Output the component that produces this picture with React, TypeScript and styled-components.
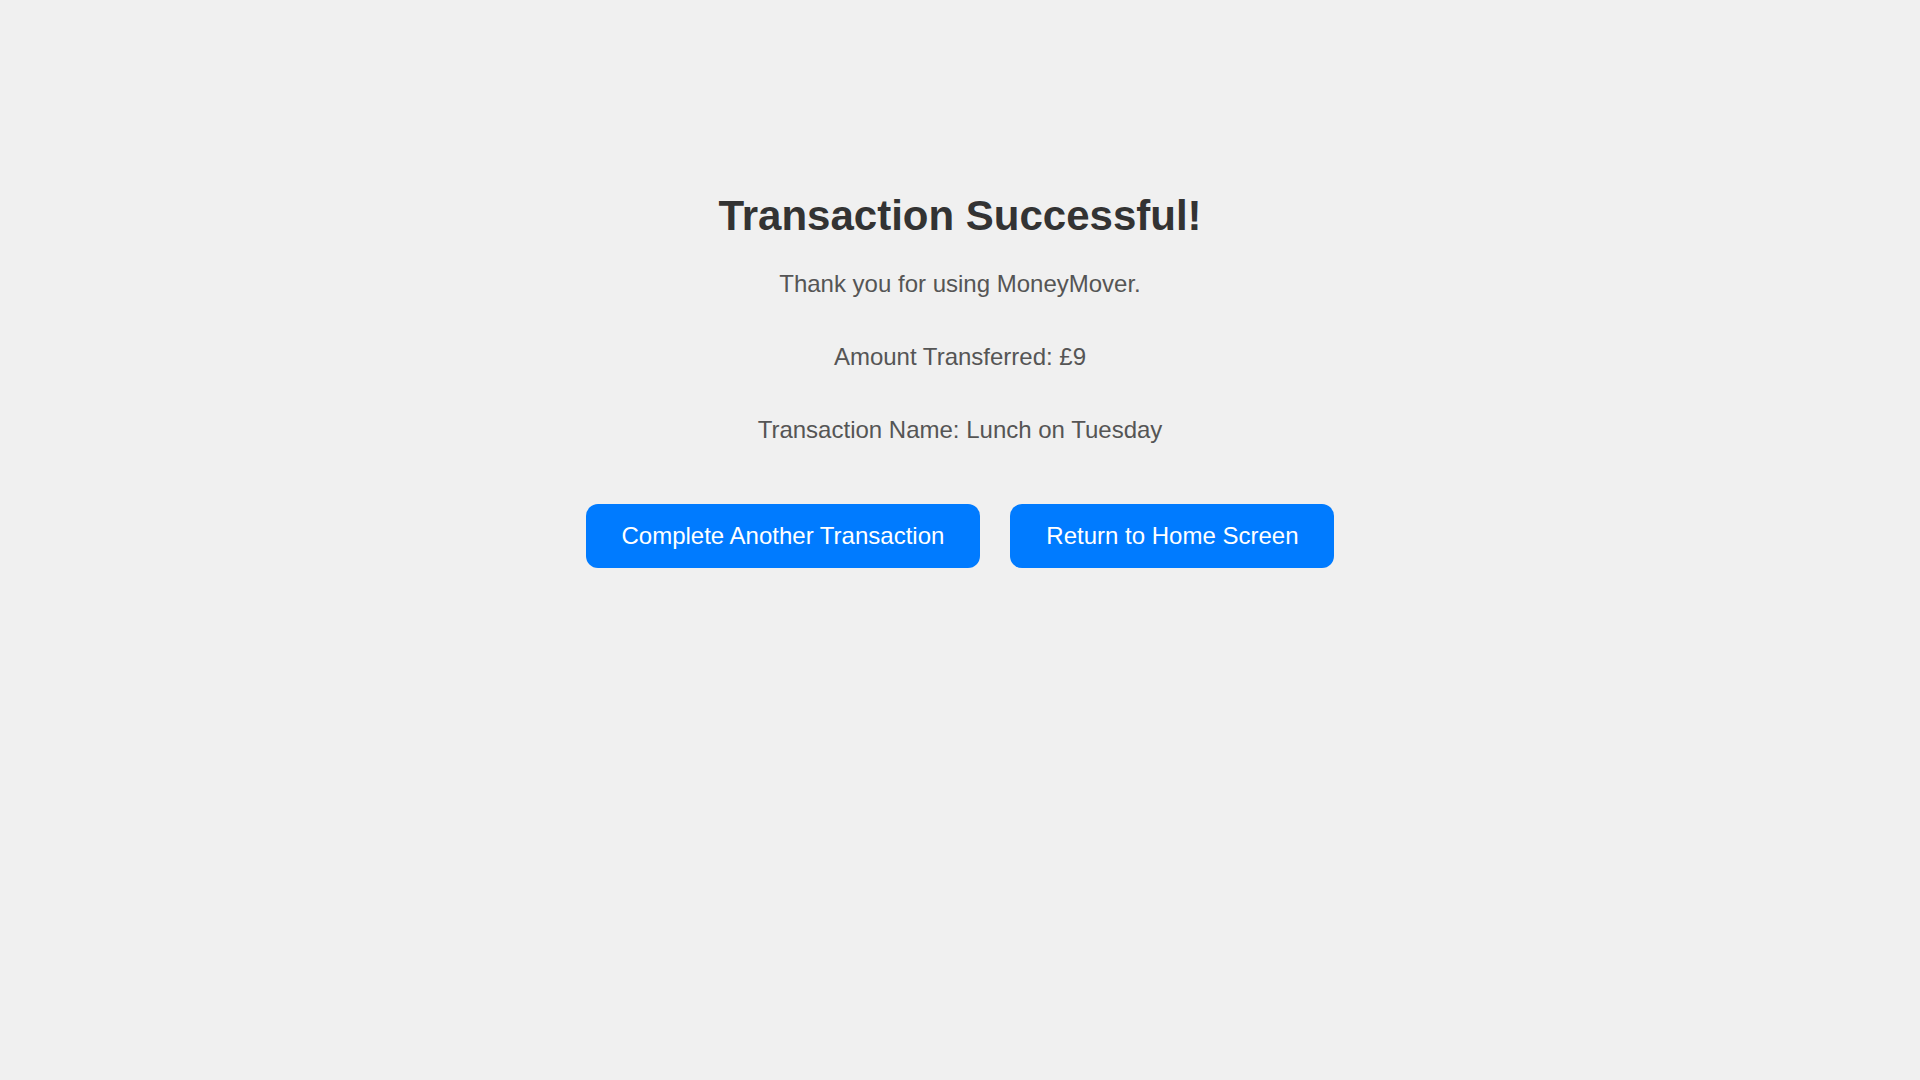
import React from "react";
import styled, { createGlobalStyle } from "styled-components";

const GlobalStyle = createGlobalStyle`
  html, body {
    margin: 0;
    padding: 0;
    background: #f0f0f0;
    font-family: "Liberation Sans", Arial, sans-serif;
  }
`;

const Page = styled.main`
  min-height: 100vh;
  box-sizing: border-box;
  padding-top: 192px;
  display: flex;
  flex-direction: column;
  align-items: center;
  text-align: center;
`;

const Title = styled.h1`
  margin: 0 0 30px;
  font-size: 42px;
  line-height: 48px;
  font-weight: 700;
  color: #333333;
`;

const Details = styled.div`
  display: flex;
  flex-direction: column;
  align-items: center;
  gap: 45px;
`;

const Line = styled.p`
  margin: 0;
  font-size: 24px;
  line-height: 28px;
  color: #555555;
`;

const Actions = styled.div`
  margin-top: 60px;
  display: flex;
  gap: 30px;
`;

const ActionButton = styled.button`
  font-family: "Liberation Sans", Arial, sans-serif;
  font-size: 24px;
  line-height: 28px;
  padding: 18px 36px;
  border: none;
  border-radius: 12px;
  background: #007bff;
  color: #ffffff;
  cursor: pointer;
`;

export default function App() {
  return (
    <>
      <GlobalStyle />
      <Page>
        <Title>Transaction Successful!</Title>
        <Details>
          <Line>Thank you for using MoneyMover.</Line>
          <Line>Amount Transferred: £9</Line>
          <Line>Transaction Name: Lunch on Tuesday</Line>
        </Details>
        <Actions>
          <ActionButton>Complete Another Transaction</ActionButton>
          <ActionButton>Return to Home Screen</ActionButton>
        </Actions>
      </Page>
    </>
  );
}
